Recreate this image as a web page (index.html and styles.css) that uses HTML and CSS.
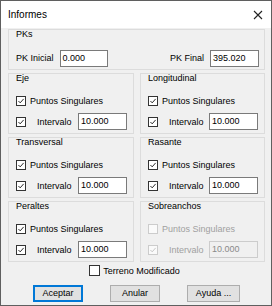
FILE: index.html
```html
<!DOCTYPE html>
<html>
<head>
<meta charset="utf-8">
<link rel="stylesheet" href="styles.css">
</head>
<body>
<div class="win">
  <div class="title">
    <span class="title-text">Informes</span>
    <svg class="close" width="10" height="10" viewBox="0 0 10 10"><path d="M1 1L9 9M9 1L1 9" stroke="#222" stroke-width="1.1" fill="none"/></svg>
  </div>
  <div class="body">
    <div class="grp pks">
      <div class="legend">PKs</div>
      <div class="pkrow">
        <div class="pkpair"><span class="lbl">PK Inicial</span><span class="inp">0.000</span></div>
        <div class="pkpair"><span class="lbl">PK Final</span><span class="inp">395.020</span></div>
      </div>
    </div>
    <div class="grid">
      <div class="grp">
        <div class="legend">Eje</div>
        <div class="row1"><span class="cb on"><svg viewBox="0 0 10 10"><path d="M1.8 5L4 7.3L8.3 2.4"/></svg></span><span>Puntos Singulares</span></div>
        <div class="row2"><span class="cb on"><svg viewBox="0 0 10 10"><path d="M1.8 5L4 7.3L8.3 2.4"/></svg></span><span class="ilbl">Intervalo</span><span class="inp">10.000</span></div>
      </div>
      <div class="grp">
        <div class="legend">Longitudinal</div>
        <div class="row1"><span class="cb on"><svg viewBox="0 0 10 10"><path d="M1.8 5L4 7.3L8.3 2.4"/></svg></span><span>Puntos Singulares</span></div>
        <div class="row2"><span class="cb on"><svg viewBox="0 0 10 10"><path d="M1.8 5L4 7.3L8.3 2.4"/></svg></span><span class="ilbl">Intervalo</span><span class="inp">10.000</span></div>
      </div>
      <div class="grp">
        <div class="legend">Transversal</div>
        <div class="row1"><span class="cb on"><svg viewBox="0 0 10 10"><path d="M1.8 5L4 7.3L8.3 2.4"/></svg></span><span>Puntos Singulares</span></div>
        <div class="row2"><span class="cb on"><svg viewBox="0 0 10 10"><path d="M1.8 5L4 7.3L8.3 2.4"/></svg></span><span class="ilbl">Intervalo</span><span class="inp">10.000</span></div>
      </div>
      <div class="grp">
        <div class="legend">Rasante</div>
        <div class="row1"><span class="cb on"><svg viewBox="0 0 10 10"><path d="M1.8 5L4 7.3L8.3 2.4"/></svg></span><span>Puntos Singulares</span></div>
        <div class="row2"><span class="cb on"><svg viewBox="0 0 10 10"><path d="M1.8 5L4 7.3L8.3 2.4"/></svg></span><span class="ilbl">Intervalo</span><span class="inp">10.000</span></div>
      </div>
      <div class="grp">
        <div class="legend">Peraltes</div>
        <div class="row1"><span class="cb on"><svg viewBox="0 0 10 10"><path d="M1.8 5L4 7.3L8.3 2.4"/></svg></span><span>Puntos Singulares</span></div>
        <div class="row2"><span class="cb on"><svg viewBox="0 0 10 10"><path d="M1.8 5L4 7.3L8.3 2.4"/></svg></span><span class="ilbl">Intervalo</span><span class="inp">10.000</span></div>
      </div>
      <div class="grp disabled">
        <div class="legend">Sobreanchos</div>
        <div class="row1"><span class="cb"></span><span>Puntos Singulares</span></div>
        <div class="row2"><span class="cb on"><svg viewBox="0 0 10 10"><path d="M1.8 5L4 7.3L8.3 2.4"/></svg></span><span class="ilbl">Intervalo</span><span class="inp">10.000</span></div>
      </div>
    </div>
    <div class="terreno"><span class="cb big"></span><span>Terreno Modificado</span></div>
    <div class="buttons">
      <span class="btn default">Aceptar</span>
      <span class="btn">Anular</span>
      <span class="btn">Ayuda ...</span>
    </div>
  </div>
</div>
</body>
</html>
```

FILE: styles.css
```css
* { box-sizing: border-box; margin: 0; padding: 0; }
html, body { width: 272px; height: 306px; overflow: hidden; }
body {
  font-family: "Liberation Sans", Arial, sans-serif;
  font-size: 9px;
  color: #000;
  background: #f0f0f0;
}
.win {
  width: 272px;
  height: 306px;
  border: 1px solid #5f5f5f;
  background: #f0f0f0;
  display: flex;
  flex-direction: column;
}
.title {
  height: 27px;
  flex: none;
  background: #fff;
  display: flex;
  align-items: center;
  justify-content: space-between;
  padding: 0 8px 0 7px;
}
.title-text { font-size: 10px; }
.close { display: block; }
.body {
  flex: 1;
  padding: 1px 6px 0 7px;
  display: flex;
  flex-direction: column;
}
.grp {
  border: 1px solid #dcdcdc;
  padding: 0 6px 0 7px;
}
.legend { line-height: 9px; height: 9px; }
.pks { height: 41px; }
.pkrow {
  margin-top: 11px;
  height: 17px;
  display: flex;
  justify-content: space-between;
  padding-right: 0;
}
.pkpair { display: flex; align-items: center; gap: 6px; }
.pkpair .lbl { line-height: 17px; }
.inp {
  display: block;
  height: 17px;
  background: #fff;
  border: 1px solid #7a7a7a;
  line-height: 15px;
  padding-left: 2px;
  width: 48px;
}
.pkpair:last-child .inp { width: 49px; margin-right: -1px; }
.grid {
  margin-top: 3px;
  display: grid;
  grid-template-columns: 126px 125px;
  column-gap: 6px;
  row-gap: 3px;
}
.grid .grp { height: 61px; }
.row1 {
  margin-top: 12px;
  height: 12px;
  display: flex;
  align-items: center;
  gap: 4px;
}
.row2 {
  margin-top: 6px;
  height: 17px;
  display: flex;
  align-items: center;
}
.row2 .ilbl { margin-left: 11px; flex: 1; }
.row2 .inp { width: 49px; }
.cb {
  width: 10px;
  height: 10px;
  flex: none;
  border: 1px solid #333;
  background: #fff;
  display: block;
}
.cb svg { display: block; width: 8px; height: 8px; }
.cb svg path { fill: none; stroke: #222; stroke-width: 1.2; }
.disabled .row1, .disabled .row2 { color: #a0a0a0; }
.disabled .cb { border-color: #cccccc; background: #fafafa; }
.disabled .cb svg path { stroke: #c4c4c4; }
.disabled .inp { border-color: #cccccc; background: #f0f0f0; color: #8a8a8a; }
.terreno {
  margin-top: 3px;
  height: 11px;
  display: flex;
  align-items: center;
  justify-content: center;
  gap: 3px;
  padding-right: 4px;
}
.cb.big { width: 11px; height: 11px; }
.buttons {
  margin-top: 9px;
  display: flex;
  padding-left: 25px;
  gap: 27px;
}
.btn {
  display: block;
  width: 50px;
  height: 17px;
  line-height: 15px;
  text-align: center;
  background: #e1e1e1;
  border: 1px solid #adadad;
}
.btn.default { border: 2px solid #0078d7; line-height: 13px; }
.btn:last-child { width: 53px; }
```
